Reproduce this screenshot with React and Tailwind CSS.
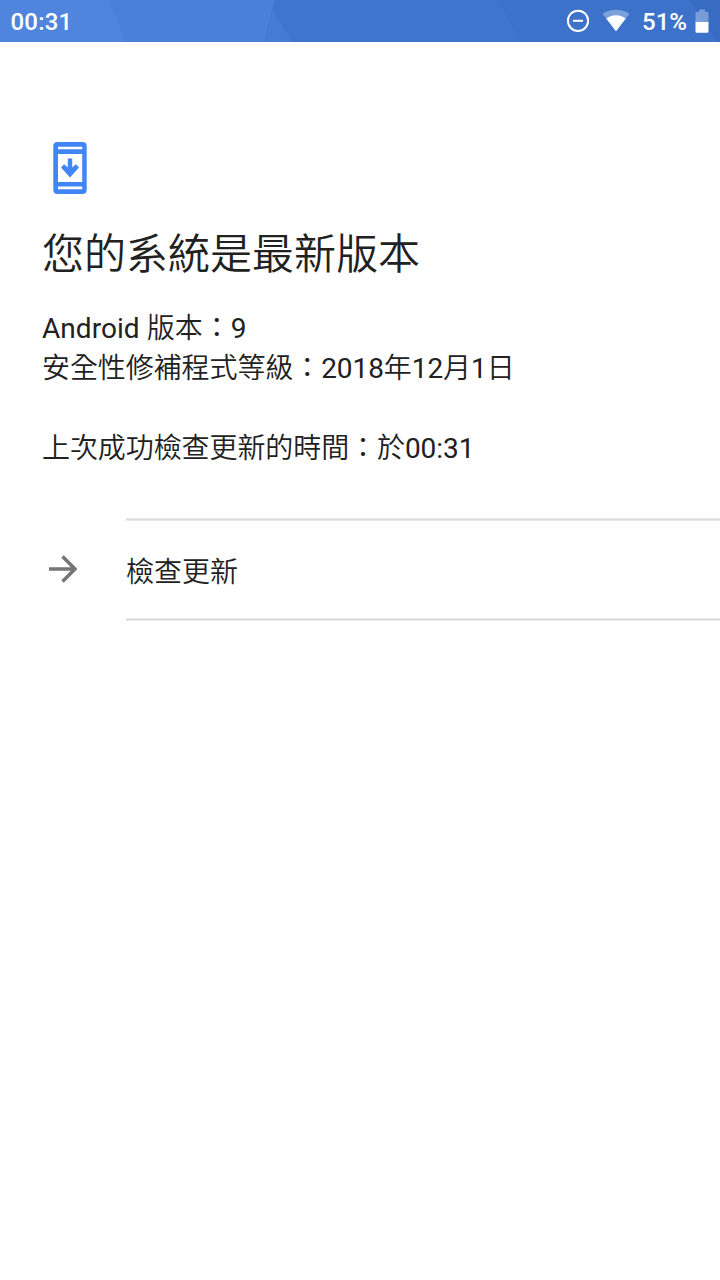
function StatusBar() {
  return (
    <header className="relative h-[42px] bg-[#3d72cb] text-white">
      <svg className="absolute inset-0" width="720" height="42" viewBox="0 0 720 42" aria-hidden="true">
        <path d="M0 0H275L264 42H0Z" fill="#4a80d9" />
        <path d="M0 0H109L125 42H0Z" fill="#4f85dd" />
        <path d="M275 0H498L521 42H292L273 10Z" fill="#4075ce" />
        <path d="M273 10L292 42H264Z" fill="#467bd4" />
        <path d="M689 0H720V42H717Z" fill="#386bc2" />
      </svg>
      <div className="relative flex h-full items-center pl-[10px] pr-[11px] text-[24px] font-medium leading-[42px]">
        <span className="pl-[0.5px] pt-[2px] tracking-[0.2px]">00:31</span>
        <div className="ml-auto flex h-full items-center">
          <DoNotDisturb />
          <Wifi />
          <span className="ml-[12px] pt-[2px]">51%</span>
          <Battery />
        </div>
      </div>
    </header>
  )
}

function DoNotDisturb() {
  return (
    <svg className="mr-[12px]" width="24" height="42" viewBox="0 0 24 42" fill="none" stroke="#fff">
      <circle cx="12" cy="20.8" r="10.1" strokeWidth="2" />
      <path d="M7 20.8H17" strokeWidth="2" />
    </svg>
  )
}

function Wifi() {
  return (
    <svg width="28" height="42" viewBox="0 0 28 42" fill="#fff">
      <path d="M0.5 13.8C8 8.5 20 8.5 27.5 13.8L14 31.3Z" opacity=".33" />
      <path d="M4.2 18.6C10 14 18 14 23.8 18.6L14 31.3Z" />
    </svg>
  )
}

function Battery() {
  return (
    <svg className="ml-[8px]" width="14" height="42" viewBox="0 0 14 42" fill="#fff">
      <path d="M4 9.5H10V12H12.6Q13.5 12 13.5 13V22H0.5V13Q0.5 12 1.4 12H4Z" opacity=".32" />
      <path d="M0.5 22H13.5V31.8Q13.5 32.7 12.6 32.7H1.4Q0.5 32.7 0.5 31.8Z" />
    </svg>
  )
}

function SystemUpdateIcon() {
  return (
    <svg className="ml-[11px]" width="34" height="52" viewBox="0 0 34 52" fill="#4285f4">
      <path
        fillRule="evenodd"
        d="M4.5 0H29.5Q33.7 0 33.7 4.2V47.8Q33.7 52 29.5 52H4.5Q.3 52 .3 47.8V4.2Q.3 0 4.5 0ZM5 4.7V7.3H29.2V4.7ZM5 12V40H29.2V12ZM5 44.5V47.2H29.2V44.5Z"
      />
      <path d="M14.8 16.5H19.2V25.6L22.9 22.3L26 25.5L17 35.4L8 25.5L11.1 22.3L14.8 25.6Z" />
    </svg>
  )
}

function Divider() {
  return <div className="h-[3px] bg-linear-to-b from-[#f0f0f0] via-[#dadada] to-[#f0f0f0]" />
}

export default function App() {
  return (
    <div className="min-h-screen w-full bg-white font-['Roboto','Noto_Sans_CJK_TC_DemiLight','Noto_Sans_CJK_TC',sans-serif] text-[#212121]" lang="zh-TW">
      <StatusBar />
      <main className="pl-[42px] pt-[100px]">
        <SystemUpdateIcon />
        <h1 className="mt-[31px] text-[42px] font-[350] leading-[60px]">您的系統是最新版本</h1>
        <div className="mt-[24px] text-[28px] leading-[40px]">
          <p className="tracking-[0.05px]">Android 版本：9</p>
          <p className="tracking-[-0.08px]">安全性修補程式等級：2018年12月1日</p>
          <p className="mt-[40px] tracking-[-0.08px]">上次成功檢查更新的時間：於00:31</p>
        </div>
        <button className="mt-[49px] flex w-full items-center text-left text-[28px]">
          <svg className="-mt-[2px] ml-[6px] mr-[49px] shrink-0" width="29" height="28" viewBox="0 0 29 28" fill="none" stroke="#757575" strokeWidth="3.5">
            <path d="M1 14H27M14.5 1.5L27 14L14.5 26.5" />
          </svg>
          <div className="flex-1">
            <Divider />
            <div className="h-[97px] pt-[3px] font-[350] leading-[97px]">檢查更新</div>
            <Divider />
          </div>
        </button>
      </main>
    </div>
  )
}
